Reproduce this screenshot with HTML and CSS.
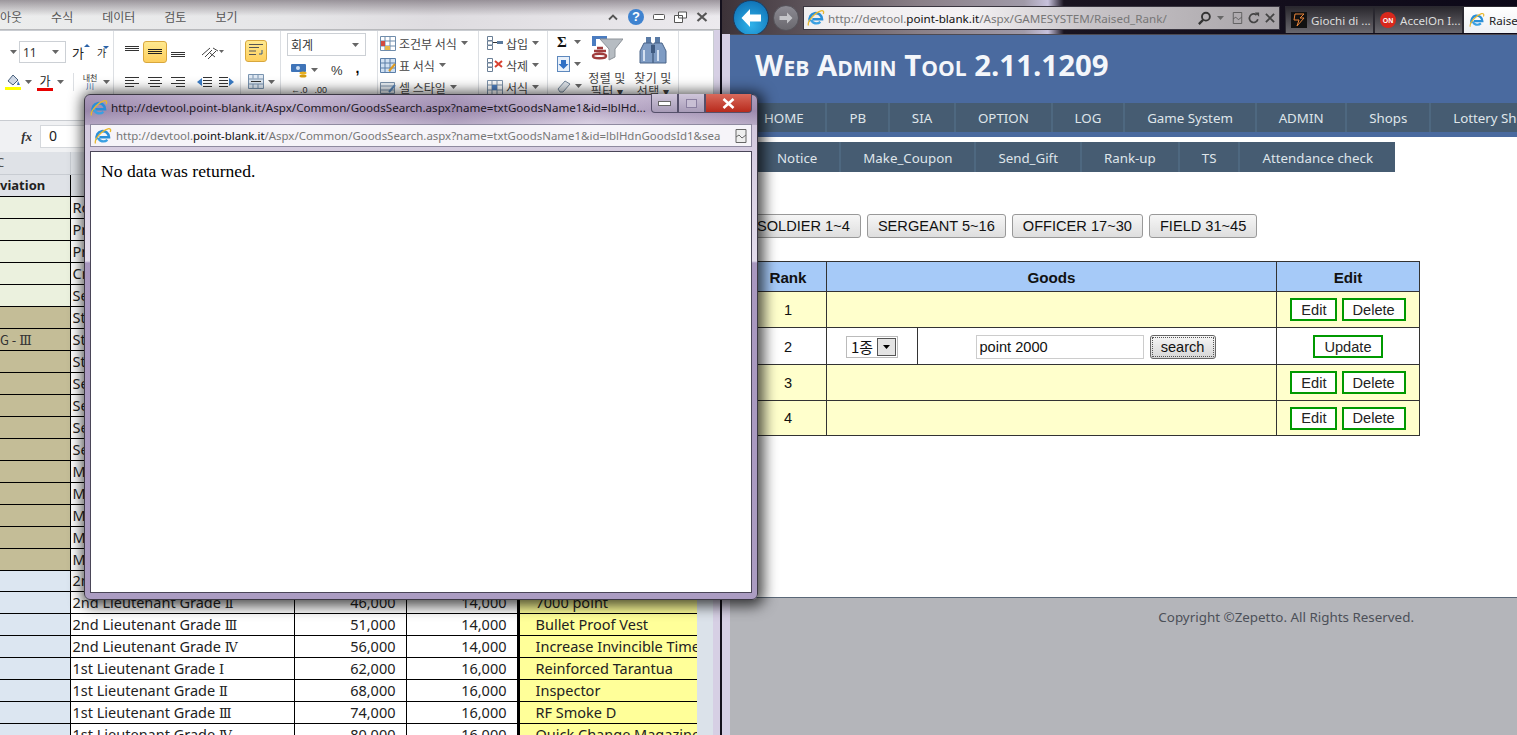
FILE: index.html
```html
<!DOCTYPE html>
<html lang="en">
<head>
  <meta charset="UTF-8" />
  <title>Raised Rank</title>
  <link rel="stylesheet" href="styles.css">
</head>
<body>
<svg class="defs" width="0" height="0">
  <symbol id="ie" viewBox="0 0 18 18">
    <path d="M3 12.5a6.2 6.2 0 1 1 12-2.2H5.4" fill="none" stroke="#2a8fd8" stroke-width="2.6"/>
    <path d="M4.6 10.6c.3 3.9 5.6 5 8.8 2.2" fill="none" stroke="#3aa0e2" stroke-width="2.4"/>
    <path d="M1.5 16.5C0 13 7 4 14 1.8c2.4-.6 3.2 1 2.2 3.2" fill="none" stroke="#e8b830" stroke-width="1.3"/>
  </symbol>
  <symbol id="caret" viewBox="0 0 7 4"><path d="M0 0h7L3.5 4z" fill="#666"/></symbol>
</svg>

<div class="desktop">

  <!-- spreadsheet window -->
  <div class="excel">
    <div class="xl-tabs">
      <span>아웃</span><span>수식</span><span>데이터</span><span>검토</span><span>보기</span>
      <div class="xl-controls">
        <svg width="12" height="8" viewBox="0 0 12 8"><path d="M2 6.5l4-4 4 4" fill="none" stroke="#555" stroke-width="1.8"/></svg>
        <span class="help">?</span>
        <svg width="12" height="6" viewBox="0 0 12 6"><rect x=".5" y=".5" width="11" height="5" rx="1" fill="#fff" stroke="#555"/></svg>
        <svg width="13" height="12" viewBox="0 0 13 12"><path d="M4.5 1h8v6h-8zM.5 4.500h8v7h-8z" fill="#fff" stroke="#555"/></svg>
        <svg width="12" height="10" viewBox="0 0 12 10"><path d="M1.500 1l9 8M10.500 1l-9 8" stroke="#555" stroke-width="2.200"/></svg>
      </div>
    </div>

    <div class="ribbon">
      <div class="grp grp-font">
        <div class="rrow">
          <svg class="car cut" width="7" height="4"><use href="#caret"/></svg>
          <div class="combo size"><span>11</span><svg width="7" height="4"><use href="#caret"/></svg></div>
          <span class="ga big">가<i class="up"></i></span>
          <span class="ga small">가<i class="down"></i></span>
        </div>
        <div class="rrow second">
          <svg width="16" height="18" viewBox="0 0 16 18"><path d="M3 8l5-6 5 5-5 5z" fill="#cfd8e6" stroke="#48607c"/><path d="M13 8l2 4h-3z" fill="#3b6fb4"/><rect y="14" width="16" height="3" fill="#ffff00"/></svg>
          <svg class="car" width="7" height="4"><use href="#caret"/></svg>
          <span class="ga under">가</span>
          <svg class="car" width="7" height="4"><use href="#caret"/></svg>
          <span class="vsep"></span>
          <span class="phonetic">내천<b>川</b></span>
          <svg class="car" width="7" height="4"><use href="#caret"/></svg>
        </div>
      </div>

      <div class="grp grp-align">
        <div class="align-left">
          <div class="rrow">
            <svg class="ln" width="14" height="14" viewBox="0 0 14 14"><path d="M0 1.500h14M0 3.500h14M0 5.500h14" stroke="#333"/></svg>
            <span class="on-btn"><svg class="ln" width="14" height="14" viewBox="0 0 14 14"><path d="M0 4.500h14M0 6.500h14M0 8.500h14" stroke="#222"/></svg></span>
            <svg class="ln" width="14" height="14" viewBox="0 0 14 14"><path d="M0 7.500h14M0 9.500h14M0 11.500h14" stroke="#333"/></svg>
            <svg class="orient" width="23" height="14" viewBox="0 0 23 14"><path d="M1 10l8-7M4 12l7-7M7 14l8-8M9 8l5 4M12 3l5 3" stroke="#444" fill="none"/><path d="M18 5h5l-2.500 3z" fill="#666"/></svg>
          </div>
          <div class="rrow second">
            <svg class="ln" width="14" height="12" viewBox="0 0 14 12"><path d="M0 1.500h14M0 4.500h9M0 7.500h14M0 10.500h9" stroke="#333"/></svg>
            <svg class="ln" width="14" height="12" viewBox="0 0 14 12"><path d="M0 1.500h14M2 4.500h10M0 7.500h14M2 10.500h10" stroke="#333"/></svg>
            <svg class="ln" width="14" height="12" viewBox="0 0 14 12"><path d="M0 1.500h14M5 4.500h9M0 7.500h14M5 10.500h9" stroke="#333"/></svg>
            <svg class="ln wide" width="15" height="12" viewBox="0 0 15 12"><path d="M6 1.500h9M6 4.500h9M6 7.500h9M6 10.500h9" stroke="#333"/><path d="M0 6l5-4v8z" fill="#3a7cc6"/></svg>
            <svg class="ln tight" width="15" height="12" viewBox="0 0 15 12"><path d="M0 1.500h9M0 4.500h9M0 7.500h9M0 10.500h9" stroke="#333"/><path d="M15 6l-5-4v8z" fill="#3a7cc6"/></svg>
          </div>
        </div>
        <div class="align-right">
          <span class="on-btn wrap"><svg width="16" height="14" viewBox="0 0 16 14"><path d="M1 .5h14M1 3.500h10M1 7h7M1 10.500h7" stroke="#555" fill="none"/><path d="M14 6v4h-3" stroke="#385d8a" fill="none"/></svg></span>
          <div class="merge"><svg width="16" height="15" viewBox="0 0 16 15"><path d="M.5.500h15v14H.5zM.5 5h15M.5 10h15M5 .5v4M10 .5v4M5 10v4M10 10v4" stroke="#7a94b0" fill="#dfe8f2"/><path d="M3 7.500h10" stroke="#333"/></svg><svg class="car" width="7" height="4"><use href="#caret"/></svg></div>
        </div>
      </div>

      <div class="grp grp-num">
        <div class="combo fmt"><span>회계</span><svg width="7" height="4"><use href="#caret"/></svg></div>
        <div class="rrow num-row">
          <svg width="16" height="15" viewBox="0 0 16 15"><rect y="1" width="15" height="8" rx="1" fill="#3f74b8"/><circle cx="7" cy="5" r="2" fill="#cfe0f4"/><ellipse cx="12" cy="10" rx="3.500" ry="1.500" fill="#e8b020"/><ellipse cx="12" cy="13" rx="3.500" ry="1.500" fill="#d49c10"/></svg>
          <svg class="car" width="7" height="4"><use href="#caret"/></svg>
          <span class="pct">%</span>
          <span class="comma">,</span>
        </div>
        <div class="rrow dec-row">
          <span class="dec">←.0</span><span class="dec">.00</span>
        </div>
      </div>

      <div class="grp grp-list grp-styles">
        <div class="li"><svg width="16" height="15" viewBox="0 0 16 15"><path d="M.5.500h15v14H.5zM.5 5h15M.5 10h15M5 .5v14M10 .5v14" stroke="#6f8cab" fill="#fff"/><rect x="1" y="5" width="4" height="5" fill="#d34b3e"/><rect x="5" y="10" width="5" height="4" fill="#e6b84a"/></svg>조건부 서식<svg class="car" width="7" height="4"><use href="#caret"/></svg></div>
        <div class="li"><svg width="16" height="15" viewBox="0 0 16 15"><path d="M.5.500h15v14H.5zM.5 5h15M.5 10h15M5 .5v14M10 .5v14" stroke="#5a7ea8" fill="#cfe0f2"/><path d="M9 13l6-7" stroke="#e09a20" stroke-width="2"/></svg>표 서식<svg class="car" width="7" height="4"><use href="#caret"/></svg></div>
        <div class="li"><svg width="16" height="15" viewBox="0 0 16 15"><path d="M.5 2.500h14v11H.5zM.5 6h14M.5 10h14" stroke="#7d93ab" fill="#eaf0f6"/><path d="M9 12l6-7" stroke="#5a86b8" stroke-width="2"/></svg>셀 스타일<svg class="car" width="7" height="4"><use href="#caret"/></svg></div>
      </div>

      <div class="grp grp-list grp-cells">
        <div class="li"><svg width="16" height="15" viewBox="0 0 16 15"><path d="M.5.500h5v4h-5zM.5 5h5v4h-5zM.5 9.500h5v4h-5z" stroke="#6a7f96" fill="#fff"/><rect x="10" y="5" width="6" height="3" fill="#5b7a9c"/><path d="M6 6.500h4" stroke="#333"/></svg>삽입<svg class="car" width="7" height="4"><use href="#caret"/></svg></div>
        <div class="li"><svg width="16" height="15" viewBox="0 0 16 15"><path d="M.5.500h5v4h-5zM.5 5h5v4h-5zM.5 9.500h5v4h-5z" stroke="#6a7f96" fill="#fff"/><path d="M8 3l7 6M15 3L8 9" stroke="#d8402f" stroke-width="2"/></svg>삭제<svg class="car" width="7" height="4"><use href="#caret"/></svg></div>
        <div class="li"><svg width="16" height="15" viewBox="0 0 16 15"><path d="M.5.500h15v14H.5zM.5 5h15M.5 10h15M5 .5v14M10 .5v14" stroke="#7d93ab" fill="#fff"/><rect x="5" y="5" width="5" height="5" fill="#4d7fc0"/></svg>서식<svg class="car" width="7" height="4"><use href="#caret"/></svg></div>
      </div>

      <div class="grp grp-edit">
        <div class="edit-small">
          <div class="rrow"><span class="sigma">Σ</span><svg class="car" width="7" height="4"><use href="#caret"/></svg></div>
          <div class="rrow"><svg width="13" height="16" viewBox="0 0 13 16"><rect x=".5" y=".5" width="12" height="15" fill="#e8f0fa" stroke="#5d88bd"/><path d="M4 4h5v4h2.500L6.500 13 1.500 8H4z" fill="#2f6fc4"/></svg><svg class="car" width="7" height="4"><use href="#caret"/></svg></div>
          <div class="rrow"><svg width="14" height="13" viewBox="0 0 14 13"><path d="M1 9l7-8 5 3-7 8H3z" fill="#dfe4ea" stroke="#75889c"/></svg><svg class="car" width="7" height="4"><use href="#caret"/></svg></div>
        </div>
        <div class="big-tool">
          <svg width="32" height="30" viewBox="0 0 32 30"><path d="M1 1h15v3H5v7H1z" fill="#4a7cc0"/><path d="M9 4h23l-8 10v8l-6 3V14z" fill="#b6bcc2" stroke="#8d9399"/><path d="M6 13h6M3 16h12M2 21c0-3 13-3 13 0s-13 3-13 0z" fill="none" stroke="#a03c3c" stroke-width="2.500"/></svg>
          <p>정렬 및<br>필터 ▾</p>
        </div>
        <div class="big-tool">
          <svg width="30" height="30" viewBox="0 0 30 30"><path d="M8 2h5v6H8zM17 2h5v6h-5z" fill="#5a7ba6"/><path d="M6 8h8l1 6v14H2V16zM24 8h-8l-1 6v14h13V16z" fill="#7f9cc4" stroke="#4a6488"/><rect x="13" y="10" width="4" height="8" fill="#3f5a80"/><path d="M6 15v11M20 15v11" stroke="#d4e0f0" stroke-width="2"/></svg>
          <p>찾기 및<br>선택 ▾</p>
        </div>
      </div>
    </div>

    <div class="formula">
      <i class="fx">fx</i>
      <div class="fbox">0</div>
    </div>

    <table class="sheet">
      <colgroup><col class="c-a"><col class="c-b"><col class="c-c"><col class="c-d"><col class="c-e"></colgroup>
      <tr class="hd"><td><span class="cut-c">C</span></td><td></td><td></td><td></td><td></td></tr>
      <tr class="hd"><td class="bold">viation</td><td></td><td></td><td></td><td></td></tr>
      <tr class="r-green"><td></td><td>Ro</td><td></td><td></td><td></td></tr>
      <tr class="r-green"><td></td><td>Pr</td><td></td><td></td><td></td></tr>
      <tr class="r-green"><td></td><td>Pr</td><td></td><td></td><td></td></tr>
      <tr class="r-green"><td></td><td>Cr</td><td></td><td></td><td></td></tr>
      <tr class="r-green"><td></td><td>Se</td><td></td><td></td><td></td></tr>
      <tr class="r-tan"><td></td><td>St</td><td></td><td></td><td></td></tr>
      <tr class="r-tan"><td class="rank-code">G - <span class="rn">Ⅲ</span></td><td>St</td><td></td><td></td><td></td></tr>
      <tr class="r-tan"><td></td><td>St</td><td></td><td></td><td></td></tr>
      <tr class="r-tan"><td></td><td>Se</td><td></td><td></td><td></td></tr>
      <tr class="r-tan"><td></td><td>Se</td><td></td><td></td><td></td></tr>
      <tr class="r-tan"><td></td><td>Se</td><td></td><td></td><td></td></tr>
      <tr class="r-tan"><td></td><td>Se</td><td></td><td></td><td></td></tr>
      <tr class="r-tan"><td></td><td>Ma</td><td></td><td></td><td></td></tr>
      <tr class="r-tan"><td></td><td>Ma</td><td></td><td></td><td></td></tr>
      <tr class="r-tan"><td></td><td>Ma</td><td></td><td></td><td></td></tr>
      <tr class="r-tan"><td></td><td>Ma</td><td></td><td></td><td></td></tr>
      <tr class="r-tan"><td></td><td>Ma</td><td></td><td></td><td></td></tr>
      <tr class="r-blue short"><td></td><td>2n</td><td></td><td></td><td></td></tr>
      <tr class="r-blue"><td></td><td>2nd Lieutenant Grade <span class="rn">Ⅱ</span></td><td class="n">46,000</td><td class="n">14,000</td><td class="y">7000 point</td></tr>
      <tr class="r-blue"><td></td><td>2nd Lieutenant Grade <span class="rn">Ⅲ</span></td><td class="n">51,000</td><td class="n">14,000</td><td class="y">Bullet Proof Vest</td></tr>
      <tr class="r-blue"><td></td><td>2nd Lieutenant Grade <span class="rn">Ⅳ</span></td><td class="n">56,000</td><td class="n">14,000</td><td class="y">Increase Invincible Time</td></tr>
      <tr class="r-blue"><td></td><td>1st Lieutenant Grade <span class="rn">Ⅰ</span></td><td class="n">62,000</td><td class="n">16,000</td><td class="y">Reinforced Tarantua</td></tr>
      <tr class="r-blue"><td></td><td>1st Lieutenant Grade <span class="rn">Ⅱ</span></td><td class="n">68,000</td><td class="n">16,000</td><td class="y">Inspector</td></tr>
      <tr class="r-blue"><td></td><td>1st Lieutenant Grade <span class="rn">Ⅲ</span></td><td class="n">74,000</td><td class="n">16,000</td><td class="y">RF Smoke D</td></tr>
      <tr class="r-blue"><td></td><td>1st Lieutenant Grade <span class="rn">Ⅳ</span></td><td class="n">80,000</td><td class="n">16,000</td><td class="y">Quick Change Magazine</td></tr>
    </table>
  </div>

  <!-- browser window -->
  <div class="browser">
    <div class="toolbar">
      <span class="back"><svg width="22" height="20" viewBox="0 0 22 20"><path d="M10 1L1.500 10 10 19v-5.500h11v-7H10z" fill="#fff"/></svg></span>
      <span class="forward"><svg width="14" height="12" viewBox="0 0 14 12"><path d="M8 .5L13.500 6 8 11.500V8H.5V4H8z" fill="#c4c4c8"/></svg></span>
      <div class="addr">
        <svg class="fav" width="18" height="18"><use href="#ie"/></svg>
        <span class="url">http://devtool.<b>point-blank.it</b>/Aspx/GAMESYSTEM/Raised_Rank/</span>
        <div class="addr-tools">
          <svg width="15" height="15" viewBox="0 0 16 16"><circle cx="9.500" cy="6" r="4.200" fill="none" stroke="#333" stroke-width="2"/><path d="M6.500 9.500L2 14" stroke="#333" stroke-width="2.400"/></svg>
          <svg width="7" height="4"><use href="#caret"/></svg>
          <svg class="gap-wide" width="11" height="14" viewBox="0 0 13 14"><path d="M1.500.5h10v13h-10zM1.500 8l3-2 3 3 4-3" fill="none" stroke="#555"/></svg>
          <svg width="12" height="12" viewBox="0 0 14 14"><path d="M11.500 8.500A5 5 0 1 1 10 3.500" fill="none" stroke="#444" stroke-width="2"/><path d="M8 .5h5v5z" fill="#444"/></svg>
          <svg width="10" height="10" viewBox="0 0 11 11"><path d="M1 1l9 9M10 1l-9 9" stroke="#444" stroke-width="2"/></svg>
        </div>
      </div>
      <div class="tab">
        <svg width="16" height="16" viewBox="0 0 16 16"><rect width="16" height="16" fill="#111"/><path d="M4 2h9L9 6h4l-7 8 2-6H3z" fill="none" stroke="#e8843a"/></svg>
        <span>Giochi di ...</span>
      </div>
      <div class="tab">
        <svg width="16" height="16" viewBox="0 0 16 16"><circle cx="8" cy="8" r="8" fill="#d8281c"/><text x="8" y="11" text-anchor="middle" class="on-mark">ON</text></svg>
        <span>AccelOn I...</span>
      </div>
      <div class="tab active">
        <svg width="16" height="16"><use href="#ie"/></svg>
        <span>Raised</span>
      </div>
    </div>

    <div class="page">
      <div class="top">
        <h1>Web Admin Tool 2.11.1209</h1>
        <div class="nav">
          <a>HOME</a><a>PB</a><a>SIA</a><a>OPTION</a><a>LOG</a><a>Game System</a><a>ADMIN</a><a>Shops</a><a>Lottery Shop</a>
        </div>
      </div>
      <div class="nav subnav">
        <a>Notice</a><a>Make_Coupon</a><a>Send_Gift</a><a>Rank-up</a><a>TS</a><a>Attendance check</a>
      </div>

      <div class="content">
        <div class="btns">
          <button class="grade">SOLDIER 1~4</button>
          <button class="grade">SERGEANT 5~16</button>
          <button class="grade">OFFICER 17~30</button>
          <button class="grade">FIELD 31~45</button>
        </div>

        <table class="ranks">
          <colgroup><col class="w-rank"><col class="w-sel"><col class="w-inp"><col class="w-edit"></colgroup>
          <tr><th>Rank</th><th colspan="2">Goods</th><th>Edit</th></tr>
          <tr class="alt"><td>1</td><td colspan="2"></td><td><button class="act">Edit</button> <button class="act">Delete</button></td></tr>
          <tr class="editing">
            <td>2</td>
            <td><div class="fake-select"><span>1종</span><i><svg width="7" height="4" viewBox="0 0 7 4"><path d="M0 0h7L3.500 4z" fill="#000"/></svg></i></div></td>
            <td class="goods-cell"><input class="goods" type="text" value="point 2000"> <button class="search">search</button></td>
            <td><button class="act">Update</button></td>
          </tr>
          <tr class="alt"><td>3</td><td colspan="2"></td><td><button class="act">Edit</button> <button class="act">Delete</button></td></tr>
          <tr class="alt"><td>4</td><td colspan="2"></td><td><button class="act">Edit</button> <button class="act">Delete</button></td></tr>
        </table>
      </div>

      <div class="footer">Copyright ©Zepetto. All Rights Reserved.</div>
    </div>
  </div>

  <!-- popup window -->
  <div class="popup">
    <div class="pop-title">
      <svg width="18" height="18"><use href="#ie"/></svg>
      <span class="pop-name">http://devtool.point-blank.it/Aspx/Common/GoodsSearch.aspx?name=txtGoodsName1&amp;id=lblHd...</span>
      <div class="pop-ctrl">
        <span class="wbtn"><i class="min"></i></span>
        <span class="wbtn"><i class="max"></i></span>
        <span class="wbtn close"><svg width="13" height="11" viewBox="0 0 13 11"><path d="M1.500 1l10 9M11.500 1l-10 9" stroke="#fff" stroke-width="2.600"/></svg></span>
      </div>
    </div>
    <div class="pop-addr">
      <svg width="18" height="18"><use href="#ie"/></svg>
      <span class="url">http://devtool.<b>point-blank.it</b>/Aspx/Common/GoodsSearch.aspx?name=txtGoodsName1&amp;id=lblHdnGoodsId1&amp;sea</span>
      <svg class="compat" width="12" height="14" viewBox="0 0 12 14"><path d="M1 .5h10v13H1zM1 8l3-2 3 3 4-3" fill="#eee" stroke="#666"/></svg>
    </div>
    <div class="pop-body">No data was returned.</div>
  </div>

</div>
</body>
</html>
```

FILE: styles.css
```css
html, body { margin: 0; padding: 0; height: 100%; overflow: hidden; }
body { font-family: "Noto Sans", "Noto Sans CJK KR", sans-serif; }
.defs { position: absolute; }
svg { flex: none; display: block; }
.desktop { position: relative; width: 1517px; height: 735px; overflow: hidden; background: #14101c; }

/* spreadsheet */
.excel { position: absolute; left: 0; top: 0; width: 720px; height: 735px; display: flex; flex-direction: column; background: linear-gradient(90deg, #dbe2ea 713px, #d6cfe4 713px); overflow: hidden; }
.xl-tabs { height: 30px; flex: none; display: flex; align-items: center; gap: 29px; font: 12px "Noto Sans CJK KR", sans-serif; color: #555; padding-top: 4px; box-sizing: border-box; background: linear-gradient(rgba(90,80,90,.55), rgba(255,255,255,0) 16px), linear-gradient(90deg, #eceded, #e6e6e8 40%, #dedce0 60%, #eceaee); border-bottom: 1px solid #b8b9bc; }
.xl-controls { margin-left: auto; display: flex; align-items: center; gap: 9px; padding-right: 12px; }
.help { width: 16px; height: 16px; border-radius: 50%; background: #3f83d0; color: #fff; font: bold 13px/16px "Liberation Sans", sans-serif; text-align: center; }

.ribbon { flex: none; height: 91px; margin-right: 6px; display: flex; background: #fff; border: 1px solid #c9ccd1; border-left: 0; box-sizing: border-box; overflow: hidden; }
.grp { flex: none; box-sizing: border-box; border-right: 1px solid #dcdfe3; padding-top: 9px; height: 100%; }
.grp-font { width: 114px; }
.grp-align { width: 167px; display: flex; }
.grp-num { width: 97px; padding: 2px 0 0 6px; }
.grp-styles { width: 101px; padding-left: 2px; }
.grp-cells { width: 69px; padding-left: 8px; }
.grp-edit { width: 131px; display: flex; padding-top: 0; }
.rrow { display: flex; align-items: center; height: 24px; }
.rrow.second { height: 22px; margin-top: 7px; }
.car { margin-left: 4px; }
.combo { display: flex; align-items: center; justify-content: space-between; box-sizing: border-box; border: 1px solid #ccd0d5; background: #fff; padding: 0 6px 0 3px; color: #333; }
.combo.size { width: 47px; height: 22px; font-size: 12px; }
.cut { margin: 0 2px 0 10px; }
.ga { font-family: "Noto Sans CJK KR", sans-serif; color: #222; position: relative; }
.ga.big { font-size: 13px; margin-left: 6px; width: 18px; }
.ga.small { font-size: 10px; margin-left: 7px; padding-right: 3px; }
.ga i { position: absolute; right: 0; top: 1px; border: 3px solid transparent; }
.ga i.up { border-bottom-color: #2a62a8; top: -2px; }
.ga i.down { border-top-color: #2a62a8; }
.ga.under { font-size: 12px; border-bottom: 3px solid #e80000; line-height: 14px; width: 16px; text-align: center; margin-left: 5px; }
.grp-font .second > svg:first-child { margin-left: 5px; }
.vsep { width: 1px; height: 18px; background: #dcdfe3; margin: 0 7px 0 9px; }
.phonetic { flex: none; font: 8px/8px "Noto Sans CJK KR", sans-serif; color: #333; width: 18px; text-align: center; white-space: nowrap; }
.phonetic b { display: block; font-weight: 400; color: #2a62a8; }

.align-left { width: 127px; padding-left: 11px; box-sizing: border-box; }
.align-left .rrow { gap: 4px; }
.align-left .rrow.second { gap: 9px; }
.on-btn { width: 24px; height: 22px; box-sizing: border-box; display: flex; align-items: center; justify-content: center; background: linear-gradient(#ffe98f, #fdcf5f); border: 1px solid #d8a73d; border-radius: 3px; }
.orient { margin-left: 12px; }
.align-left .ln.wide { margin-left: 3px; }
.align-left .ln.tight { margin-left: -2px; }
.align-right { width: 40px; border-left: 1px solid #dcdfe3; padding-left: 4px; box-sizing: border-box; }
.on-btn.wrap { width: 22px; }
.merge { display: flex; align-items: center; margin: 12px 0 0 3px; }

.combo.fmt { width: 79px; height: 23px; font: 12px "Noto Sans CJK KR", sans-serif; }
.num-row { margin: 4px 0 0 4px; height: 20px; }
.pct { font: 13px "Liberation Sans", sans-serif; color: #333; margin-left: 13px; }
.comma { font: bold 14px "Liberation Sans", sans-serif; margin-left: 13px; margin-top: -4px; }
.dec-row { margin: 3px 0 0 4px; height: 14px; gap: 7px; }
.dec { font: 9px "Liberation Sans", sans-serif; color: #333; }

.grp-list { padding-top: 1px; }
.li { display: flex; align-items: center; height: 22px; font: 12px "Noto Sans CJK KR", sans-serif; color: #444; }
.li svg:first-child { margin-right: 3px; }

.edit-small { width: 37px; padding-left: 9px; box-sizing: border-box; }
.edit-small .rrow { height: 22px; }
.sigma { font: bold 15px "Liberation Serif", serif; color: #111; width: 13px; }
.big-tool { width: 44px; display: flex; flex-direction: column; align-items: center; }
.big-tool + .big-tool { margin-left: 2px; }
.big-tool svg { margin-top: 4px; }
.big-tool p { margin: 6px 0 0; font: 12px/13px "Noto Sans CJK KR", sans-serif; letter-spacing: .4px; color: #444; text-align: center; white-space: nowrap; }

.formula { flex: none; height: 31px; box-sizing: border-box; padding-top: 4px; display: flex; margin-right: 7px; background: #f0f1f3; }
.fx { width: 40px; font: italic bold 13px/23px "Liberation Serif", serif; color: #333; text-align: right; padding-right: 8px; box-sizing: border-box; }
.fbox { flex: 1; height: 23px; background: #fff; border: 1px solid #d5d8dc; box-sizing: border-box; padding-left: 8px; font-size: 14px; line-height: 20px; color: #222; }

.sheet { border-collapse: collapse; table-layout: fixed; width: 697px; flex: none; font-size: 14.5px; color: #222; background: #fff; }
.c-a { width: 70px; }
.c-b { width: 224px; }
.c-c { width: 112px; }
.c-d { width: 112px; }
.c-e { width: 179px; }
.sheet tr { height: 22px; }
.sheet tr.short { height: 21px; }
.sheet td { padding: 0 2px; border-right: 1px solid #000; border-bottom: 1px solid #000; white-space: nowrap; overflow: hidden; line-height: 19px; height: 21px; background: #fff; box-sizing: border-box; }
.sheet td:first-child { padding: 0; }
.sheet td:last-child { border-right: 0; }
.hd td { background: #dfe2e7; }
.hd:first-child td { border-color: #c8ccd2; }
.cut-c { display: block; text-indent: -4px; color: #555; font-size: 13px; }
.sheet td.bold { font-weight: 700; font-size: 13px; }
.r-green td:first-child { background: #ebf1de; }
.r-tan td:first-child { background: #c4bd97; }
.r-blue td:first-child { background: #dce6f1; }
.rank-code { font-family: "Noto Sans CJK KR", sans-serif; font-size: 13px; color: #333; }
.rn { font-family: "DejaVu Serif", serif; font-size: 13px; line-height: 1; }
.sheet td.n { text-align: right; padding-right: 10px; }
.sheet td.y { background: #ffff99; padding-left: 16px; border-left: 3px solid #000; }

/* browser */
.browser { position: absolute; left: 722px; top: 0; width: 795px; height: 735px; display: flex; flex-direction: column; background: #d6cfe4; border-left: 8px solid #d6cfe4; box-sizing: border-box; }
.toolbar { flex: none; height: 34px; margin-left: -8px; display: flex; align-items: flex-start; padding-left: 11px; background: linear-gradient(90deg, #3c3238, #8a8088 25%, #a09aa8 38%, #c8c2dc 41%, #1a1420 43%, #0c0818); }
.back { flex: none; width: 36px; height: 36px; border-radius: 50%; background: radial-gradient(circle at 50% 70%, #2fb2ea, #0a66ac); border: 1px solid #1c3c60; box-sizing: border-box; display: flex; align-items: center; justify-content: center; }
.forward { flex: none; width: 26px; height: 26px; margin: 5px 4px 0 4px; border-radius: 50%; background: linear-gradient(#8c8a92, #6a686e); border: 1px solid #55535a; box-sizing: border-box; display: flex; align-items: center; justify-content: center; }
.addr { flex: none; width: 477px; height: 24px; margin-top: 6px; box-sizing: border-box; display: flex; align-items: center; padding-left: 3px; background: linear-gradient(90deg, #f0eef0, #f4f2f4 35%, #c8c4c8 60%, #a8a4a8); border: 1px solid #3a3640; }
.url { font-size: 11.65px; color: #777; white-space: nowrap; margin-left: 3px; }
.url b { font-weight: 400; color: #111; }
.addr-tools { margin-left: auto; display: flex; align-items: center; gap: 5px; padding-right: 4px; }
.addr-tools .gap-wide { margin-left: 3px; }
.tab { flex: none; width: 89px; height: 27px; margin: 6px 0 0 0; box-sizing: border-box; border: 1px solid #2a2830; border-bottom: 0; display: flex; align-items: center; gap: 4px; padding-left: 5px; font-size: 11.6px; color: #ddd; background: linear-gradient(#2a282e, #6a686e); white-space: nowrap; overflow: hidden; }
.addr + .tab { margin-left: 5px; }
.tab.active { background: linear-gradient(#fff, #eef0f4); color: #222; }
.on-mark { font: bold 7px "Liberation Sans", sans-serif; fill: #fff; }

.page { flex: 1; display: flex; flex-direction: column; background: #fff; min-height: 0; overflow: hidden; border-top: 1px solid #4d4a52; }
.top { flex: none; height: 102px; background: #4a6a9f; padding-bottom: 5px; box-sizing: border-box; display: flex; flex-direction: column; justify-content: flex-end; }
h1 { margin: 0; flex: 1; font: 700 29.4px/61px "Open Sans", sans-serif; font-variant: small-caps; color: #f4f6fa; padding-left: 25px; white-space: nowrap; }
.nav { display: flex; flex: none; height: 29px; margin-left: 12px; background: #465c72; color: #dfe5ea; font-size: 13.3px; line-height: 31px; white-space: nowrap; }
.nav a { padding: 0 21.9px; border-right: 2px solid #4e6880; }
.nav a:last-child { border-right: 0; }
.subnav { align-self: flex-start; height: 30px; margin: 5px 0 0 25px; line-height: 32px; }
.subnav a { padding: 0 22px; }
.content { flex: 1; padding: 42px 0 0 16px; position: relative; }
.btns { display: flex; gap: 6px; }
.grade { height: 24px; padding: 0 10px; border: 1px solid #999; border-radius: 3px; background: linear-gradient(#f6f6f6, #dedede); font: 14.6px "Liberation Sans", sans-serif; color: #111; white-space: nowrap; }
.ranks { border-collapse: collapse; table-layout: fixed; width: 670px; margin: 23px 0 0 3px; font: 14.6px "Liberation Sans", sans-serif; color: #111; }
.w-rank { width: 77px; }
.w-sel { width: 91px; }
.w-inp { width: 359px; }
.w-edit { width: 143px; }
.ranks th, .ranks td { border: 1px solid #333; text-align: center; padding: 0; }
.ranks th { height: 28px; padding-top: 1px; background: #a6caf8; font-size: 15.2px; }
.ranks td { height: 35px; }
.ranks .editing td { height: 35px; padding-top: 1px; }
.ranks .editing .goods-cell { padding-right: 2px; }
.ranks tr:last-child td { height: 34px; }
.ranks .alt td { background: #ffffcc; }
.act { height: 23px; padding: 0 9px; background: #fff; border: 2px solid #090; font: 14.6px "Liberation Sans", sans-serif; color: #222; }
.fake-select { display: flex; align-items: center; justify-content: space-between; width: 52px; height: 22px; margin-left: 19px; box-sizing: border-box; border: 1px solid #bbb; padding: 0 1px 0 4px; font: 15px "Noto Sans CJK KR", sans-serif; }
.fake-select i { width: 19px; height: 18px; display: flex; align-items: center; justify-content: center; background: #e4e4e4; border: 1px solid #555; box-sizing: border-box; }
.goods { width: 168px; height: 24px; box-sizing: border-box; border: 1px solid #ccc; padding: 0 2px; font: 14.6px "Liberation Sans", sans-serif; color: #111; }
.search { width: 66px; height: 24px; margin-left: 1px; padding: 0; border: 1px solid #666; border-radius: 3px; outline: 1px dotted #555; outline-offset: -3px; background: linear-gradient(#f6f6f6, #d6d6d6); font: 14.6px "Liberation Sans", sans-serif; color: #111; }
.footer { flex: none; height: 138px; box-sizing: border-box; background: #b4b5ba; border-top: 1px solid #5a6878; padding: 10px 103px 0 0; text-align: right; font-size: 13.4px; color: #4c5058; }

/* popup */
.popup { position: absolute; left: 84px; top: 94px; width: 674px; height: 506px; box-sizing: border-box; border-radius: 6px; padding: 0 5px 6px 5px; display: flex; flex-direction: column; border: 1px solid #3c3844; background: linear-gradient(90deg, rgba(120,100,140,.35), rgba(255,255,255,.15) 30%, rgba(120,100,140,.3) 55%, rgba(255,255,255,.2) 75%, rgba(120,100,140,.3)) 0 0 / 100% 30px no-repeat, linear-gradient(#c4b5d2, #ad9bbd 16px, #d3c9de 30px, #e3dcec 166px, #a998c0 168px, #ab9cc2); box-shadow: 2px 2px 14px 4px rgba(0,0,0,.7); }
.pop-title { flex: none; height: 29px; display: flex; align-items: flex-start; gap: 3px; padding-top: 4px; box-sizing: border-box; font-size: 11.6px; color: #1c1824; }
.pop-name { white-space: nowrap; margin-top: 1px; }
.pop-ctrl { margin-left: auto; margin-top: -5px; display: flex; height: 19px; flex: none; }
.wbtn { width: 27px; box-sizing: border-box; border: 1px solid #55506a; border-top: 0; background: linear-gradient(#cfc6da, #a89cb8); display: flex; align-items: center; justify-content: center; }
.wbtn:first-child { border-radius: 0 0 0 4px; }
.wbtn.close { width: 47px; border-radius: 0 0 4px 0; background: linear-gradient(#d86a5c, #b82a1c); }
.min { width: 11px; height: 3px; background: #fff; border: 1px solid #666; }
.max { width: 9px; height: 7px; border: 1px solid #8a7fa0; background: #c8bfd4; }
.pop-addr { flex: none; height: 23px; display: flex; align-items: center; box-sizing: border-box; padding: 0 4px 0 3px; background: #f6f4f9; border: 1px solid #8f8aa0; }
.pop-addr .url { margin-left: 4px; font-size: 11.45px; }
.compat { margin-left: auto; }
.pop-body { flex: 1; margin-top: 4px; background: #fff; border: 1px solid #4a4658; padding: 9px 9px 9px 10px; font: 17.6px "Liberation Serif", serif; color: #000; }
```
